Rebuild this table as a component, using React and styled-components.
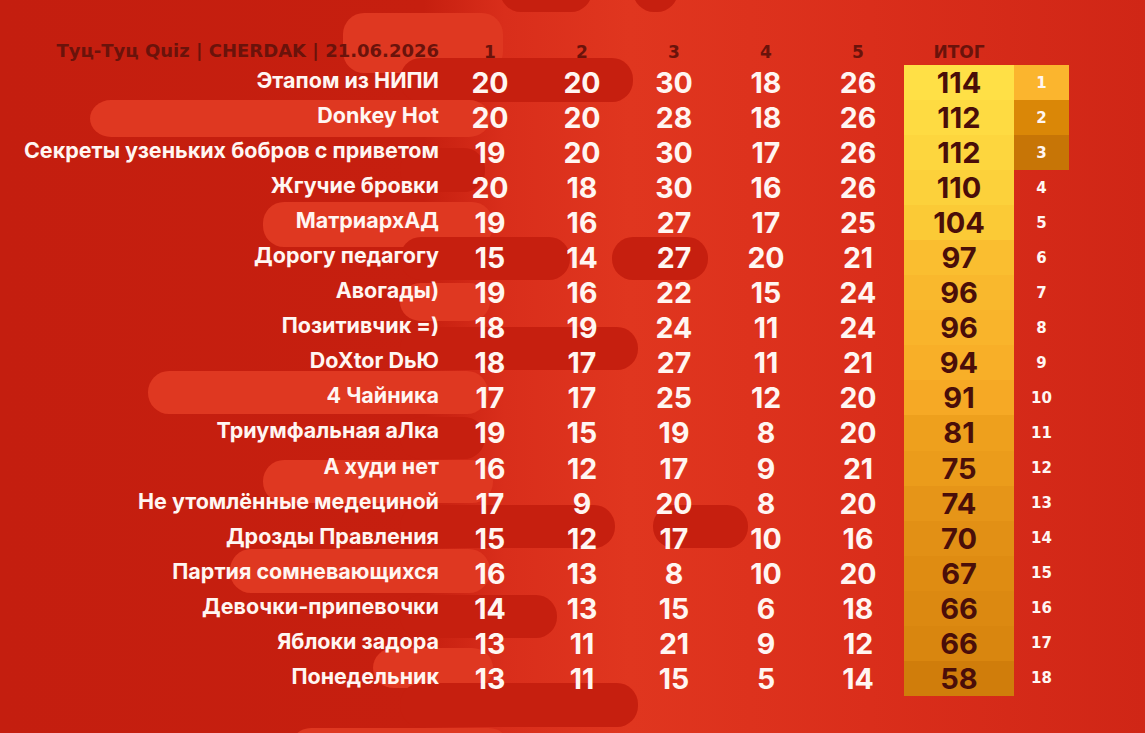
import { Fragment } from "react";
import styled, { createGlobalStyle } from "styled-components";

const GlobalStyle = createGlobalStyle`
  html, body {
    margin: 0;
    padding: 0;
    background: #c9220f;
  }
`;

const Page = styled.div`
  position: relative;
  width: 1145px;
  height: 733px;
  overflow: hidden;
  font-family: "Inter", "Noto Sans", sans-serif;
  background: linear-gradient(
    90deg,
    #c41e0f 0%,
    #c61f0f 37%,
    #d92e1b 44%,
    #e0361f 55%,
    #da2e1b 76%,
    #d02616 100%
  );
`;

const Decor = styled.svg`
  position: absolute;
  inset: 0;
  width: 100%;
  height: 100%;
`;

const Board = styled.div`
  position: relative;
  display: grid;
  grid-template-columns: 444px repeat(5, 92px) 110px 55px;
  grid-template-rows: 30px repeat(18, 35.06px);
  padding-top: 35px;
`;

const Title = styled.div`
  display: flex;
  align-items: center;
  justify-content: flex-end;
  padding-right: 5px;
  font-family: "DejaVu Sans", sans-serif;
  font-size: 18px;
  font-weight: 700;
  color: #6a130b;
  white-space: nowrap;
`;

const ColHead = styled.div`
  display: flex;
  align-items: center;
  justify-content: center;
  padding-top: 3px;
  font-family: "DejaVu Sans", sans-serif;
  font-size: 17px;
  font-weight: 700;
  color: #6a130b;
`;

const TeamName = styled.div`
  display: flex;
  align-items: center;
  justify-content: flex-end;
  padding: 0 5px 5px 0;
  font-size: 21.5px;
  font-weight: 700;
  color: #fff6f2;
  white-space: nowrap;
`;

const Score = styled.div`
  display: flex;
  align-items: center;
  justify-content: center;
  font-size: 28.5px;
  font-weight: 700;
  color: #fff6f2;
`;

const Total = styled.div`
  display: flex;
  align-items: center;
  justify-content: center;
  font-size: 29px;
  font-weight: 700;
  color: #4a0e09;
  background: ${(p) => p.$bg};
`;

const Rank = styled.div`
  display: flex;
  align-items: center;
  justify-content: center;
  font-family: "DejaVu Sans", sans-serif;
  font-size: 15px;
  font-weight: 700;
  color: #fff6f2;
  background: ${(p) => p.$bg || "transparent"};
`;

const teams = [
  ["Этапом из НИПИ", [20, 20, 30, 18, 26], 114],
  ["Donkey Hot", [20, 20, 28, 18, 26], 112],
  ["Секреты узеньких бобров с приветом", [19, 20, 30, 17, 26], 112],
  ["Жгучие бровки", [20, 18, 30, 16, 26], 110],
  ["МатриархАД", [19, 16, 27, 17, 25], 104],
  ["Дорогу педагогу", [15, 14, 27, 20, 21], 97],
  ["Авогады)", [19, 16, 22, 15, 24], 96],
  ["Позитивчик =)", [18, 19, 24, 11, 24], 96],
  ["DoXtor DьЮ", [18, 17, 27, 11, 21], 94],
  ["4 Чайника", [17, 17, 25, 12, 20], 91],
  ["Триумфальная аЛка", [19, 15, 19, 8, 20], 81],
  ["А худи нет", [16, 12, 17, 9, 21], 75],
  ["Не утомлённые медециной", [17, 9, 20, 8, 20], 74],
  ["Дрозды Правления", [15, 12, 17, 10, 16], 70],
  ["Партия сомневающихся", [16, 13, 8, 10, 20], 67],
  ["Девочки-припевочки", [14, 13, 15, 6, 18], 66],
  ["Яблоки задора", [13, 11, 21, 9, 12], 66],
  ["Понедельник", [13, 11, 15, 5, 14], 58],
];

const totalShades = [
  "#ffe046", "#fedb42", "#fdd63e", "#fcd13b", "#fbca36", "#fabe30",
  "#f9b82d", "#f9b42b", "#f8af28", "#f6a925", "#eea01d", "#eb9c1b",
  "#e69518", "#e29015", "#df8c12", "#dc8911", "#d9860f", "#d07d0b",
];

const podium = ["#fbb52e", "#da8707", "#c77506"];

// background fingers: [x, y, w, h, tone]
const pills = [
  [500, -30, 92, 42, "d"],
  [633, -30, 45, 42, "d"],
  [343, 13, 160, 60, "l"],
  [400, 58, 233, 44, "d"],
  [90, 100, 400, 37, "l"],
  [400, 148, 85, 44, "d"],
  [263, 202, 230, 45, "l"],
  [400, 237, 170, 43, "d"],
  [612, 237, 96, 43, "d"],
  [400, 283, 90, 38, "l"],
  [400, 327, 238, 43, "d"],
  [148, 371, 340, 43, "l"],
  [400, 417, 85, 42, "d"],
  [263, 460, 230, 43, "l"],
  [400, 505, 215, 43, "d"],
  [653, 505, 95, 43, "d"],
  [230, 549, 260, 44, "l"],
  [400, 595, 157, 43, "d"],
  [373, 648, 120, 40, "l"],
  [400, 683, 238, 44, "d"],
  [290, 728, 220, 42, "l"],
];

export default function App() {
  return (
    <Page>
      <GlobalStyle />
      <Decor viewBox="0 0 1145 733" aria-hidden="true">
        {pills.map(([x, y, w, h, t], i) => (
          <rect
            key={i}
            x={x}
            y={y}
            width={w}
            height={h}
            rx={21}
            fill={t === "d" ? "#c61f0f" : "#df3821"}
          />
        ))}
      </Decor>
      <Board>
        <Title>Туц-Туц Quiz | CHERDAK | 21.06.2026</Title>
        {[1, 2, 3, 4, 5].map((n) => (
          <ColHead key={n}>{n}</ColHead>
        ))}
        <ColHead>ИТОГ</ColHead>
        <ColHead />
        {teams.map(([name, scores, total], i) => (
          <Fragment key={name}>
            <TeamName>{name}</TeamName>
            {scores.map((s, j) => (
              <Score key={j}>{s}</Score>
            ))}
            <Total $bg={totalShades[i]}>{total}</Total>
            <Rank $bg={podium[i]}>{i + 1}</Rank>
          </Fragment>
        ))}
      </Board>
    </Page>
  );
}
